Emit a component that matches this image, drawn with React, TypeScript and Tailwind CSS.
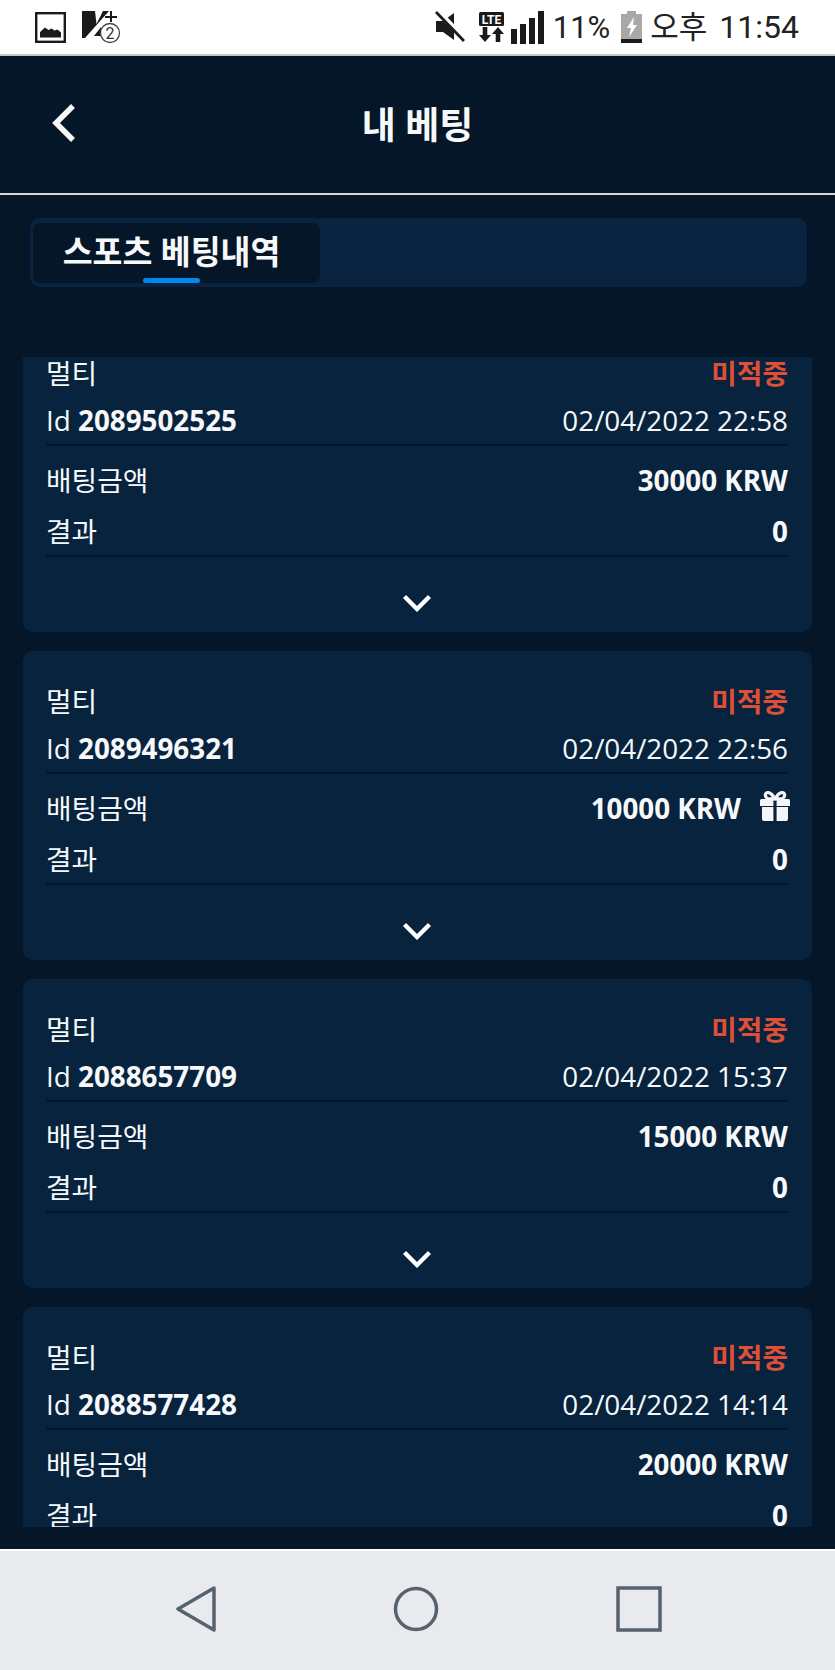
import React from "react";

const font = { fontFamily: '"Open Sans","Noto Sans CJK KR",sans-serif' };

function Chevron() {
  return (
    <svg width="30" height="18" viewBox="0 0 30 18" fill="none">
      <path d="M2.500 2.500 L15 15 L27.500 2.500" stroke="#fff" strokeWidth="4.300" />
    </svg>
  );
}

function Gift() {
  return (
    <svg width="30" height="30" viewBox="0 0 30 30" fill="#f4f6f8">
      <path d="M1.500 8h11.900v7H0V9.500A1.500 1.500 0 0 1 1.500 8zM16.600 8H28.500A1.500 1.500 0 0 1 30 9.500v5.500H16.600z" />
      <path d="M2 16h11.400v14H4a2 2 0 0 1-2-2zM16.600 16H28v12a2 2 0 0 1-2 2h-9.400z" />
      <path
        d="M15 8 C12.500 3.500 9.500 1 7 1.700 C4.500 2.500 5 6.500 7.500 7.500 L15 8 C17.500 3.500 20.500 1 23 1.700 C25.500 2.500 25 6.500 22.500 7.500 L15 8"
        fill="none"
        stroke="#f4f6f8"
        strokeWidth="3.200"
      />
    </svg>
  );
}

type Bet = { id: string; date: string; amount: string; gift?: boolean };

const bets: Bet[] = [
  { id: "2089502525", date: "02/04/2022 22:58", amount: "30000 KRW" },
  { id: "2089496321", date: "02/04/2022 22:56", amount: "10000 KRW", gift: true },
  { id: "2088657709", date: "02/04/2022 15:37", amount: "15000 KRW" },
  { id: "2088577428", date: "02/04/2022 14:14", amount: "20000 KRW" },
];

function Card({ bet }: { bet: Bet }) {
  return (
    <div className="h-[309px] shrink-0 rounded-[10px] bg-[#08233e] pl-[23px] pr-[24px] pt-[27px] text-[27.800px] leading-[40px] text-[#f7f8f9]">
      <div className="flex h-[46px] items-center justify-between">
        <span>멀티</span>
        <span className="font-bold text-[#dd4f38]">미적중</span>
      </div>
      <div className="flex h-[50px] items-center justify-between border-b-2 border-[#051628]">
        <span>
          Id <b>{bet.id}</b>
        </span>
        <span>{bet.date}</span>
      </div>
      <div className="flex h-[58px] items-center justify-between pt-[9px]">
        <span>배팅금액</span>
        <span className="flex items-center font-bold">
          {bet.amount}
          {bet.gift && (
            <span className="-mr-[2px] -mt-[4px] ml-[19px] flex">
              <Gift />
            </span>
          )}
        </span>
      </div>
      <div className="flex h-[53px] items-center justify-between border-b-2 border-[#051628] pt-[3px]">
        <span>결과</span>
        <b>0</b>
      </div>
      <div className="flex justify-center pt-[37px]">
        <Chevron />
      </div>
    </div>
  );
}

function StatusBar() {
  return (
    <div
      className="flex h-[56px] shrink-0 items-center justify-between border-b-2 border-[#c4c7cb] bg-white pl-[35px] pr-[36px] text-[#222]"
      style={{ fontFamily: 'Roboto,"Noto Sans CJK KR",sans-serif' }}
    >
      <div className="flex items-center gap-[16px]">
        <svg width="31" height="31" viewBox="0 0 31 31">
          <rect x="1.200" y="1.200" width="28.600" height="28.600" fill="none" stroke="#1a1a1a" strokeWidth="2.400" />
          <path d="M5 25.500V20l5-4.500 3.500 2.500 3-1.500 3 2 3-1 3.500 3v5z" fill="#1a1a1a" />
        </svg>
        <svg width="39" height="34" viewBox="0 0 39 34">
          <path d="M0 1h13l1.500 13L21 1h6L3 28H0z" fill="#1a1a1a" />
          <path d="M12 26l7-9v9z" fill="#1a1a1a" />
          <path d="M23 7h12M29 1v11" stroke="#1a1a1a" strokeWidth="2" />
          <circle cx="28" cy="23" r="9.500" fill="#fff" stroke="#444" strokeWidth="1.300" />
          <text x="28" y="29" textAnchor="middle" fontSize="16" fill="#333" fontFamily="Roboto">2</text>
        </svg>
      </div>
      <div className="flex items-center">
        <svg width="30" height="32" viewBox="0 0 30 32" className="mr-[14px]">
          <path d="M1 10h7l11-8v27l-11-8H1z" fill="#1a1a1a" />
          <path d="M2 -1l28 30" stroke="#fff" strokeWidth="5.500" />
          <path d="M1 1l28 29" stroke="#1a1a1a" strokeWidth="2.800" />
        </svg>
        <svg width="25" height="30" viewBox="0 0 25 30" className="mr-[7px]">
          <rect x="0" y="0" width="25" height="14" rx="1.500" fill="#1a1a1a" />
          <text x="12.500" y="11.500" textAnchor="middle" fontSize="12" fontWeight="700" fill="#fff" fontFamily="Roboto">LTE</text>
          <path d="M6 30l-6-7h3.700v-8h4.600v8H12z M19 15l6 7h-3.700v8h-4.600v-8H13z" fill="#1a1a1a" />
        </svg>
        <svg width="33" height="33" viewBox="0 0 33 33" className="mr-[9px]">
          <path d="M0 18h6v15H0zM9 13h6v20H9zM18 7h6v26h-6zM27 0h6v33h-6z" fill="#1a1a1a" />
        </svg>
        <span className="text-[31px] leading-none">11%</span>
        <svg width="21" height="32" viewBox="0 0 21 32" className="ml-[11px] mr-[8px]">
          <path d="M6 0h9v3h6v29H0V3h6z" fill="#a8a8a8" />
          <path d="M0 28h21v4H0z" fill="#1a1a1a" />
          <path d="M13 6l-7 11h4l-2 9 8-12h-4z" fill="#fff" />
        </svg>
        <span className="text-[31px] leading-none">오후</span>
        <span className="ml-[12px] text-[32px] leading-none">11:54</span>
      </div>
    </div>
  );
}

export default function App() {
  return (
    <div className="flex h-[1670px] w-[835px] flex-col overflow-hidden bg-[#051628]" style={font}>
      <StatusBar />
      <div className="relative flex h-[139px] shrink-0 items-center justify-center border-b-2 border-[#d2d4d6]">
        <svg width="24" height="40" viewBox="0 0 24 40" className="absolute left-[52px] top-[47px]" fill="none">
          <path d="M21 3 L4 20 L21 37" stroke="#f8f8f8" strokeWidth="5.500" />
        </svg>
        <span className="text-[37px] font-bold leading-none text-[#f7f8f9]">내 베팅</span>
      </div>
      <div className="ml-[30px] mr-[28px] mt-[23px] flex h-[69px] shrink-0 rounded-[10px] bg-[#0a2340] pb-[4px] pl-[3px] pr-[3px] pt-[5px]">
        <div className="relative flex w-[287px] items-center justify-center rounded-[8px] bg-[#051628] pb-[2px] pr-[10px] text-[32.500px] font-bold leading-none text-[#f7f8f9]">
          스포츠 베팅내역
          <span className="absolute bottom-0 left-[110px] h-[5px] w-[57px] rounded-[3px] bg-[#0088ee]" />
        </div>
      </div>
      <div className="mx-[23px] mt-[70px] flex h-[1170px] shrink-0 flex-col overflow-hidden">
        <div className="-mt-[34px] flex flex-col gap-[19px]">
          {bets.map((b) => (
            <Card key={b.id} bet={b} />
          ))}
        </div>
      </div>
      <div className="mt-auto flex h-[121px] items-center justify-center gap-[177px] border-t-[2px] border-white bg-[#e9eaee] pb-[4px] pl-[3px]">
        <svg width="40" height="46" viewBox="0 0 40 46" fill="none">
          <path d="M38 2 L2 23 L38 44 Z" stroke="#56636e" strokeWidth="3.500" strokeLinejoin="round" />
        </svg>
        <svg width="46" height="46" viewBox="0 0 46 46" fill="none">
          <circle cx="23" cy="23" r="20.500" stroke="#56636e" strokeWidth="3.500" />
        </svg>
        <svg width="46" height="46" viewBox="0 0 46 46" fill="none">
          <rect x="2" y="2" width="42" height="42" stroke="#56636e" strokeWidth="3.500" />
        </svg>
      </div>
    </div>
  );
}
